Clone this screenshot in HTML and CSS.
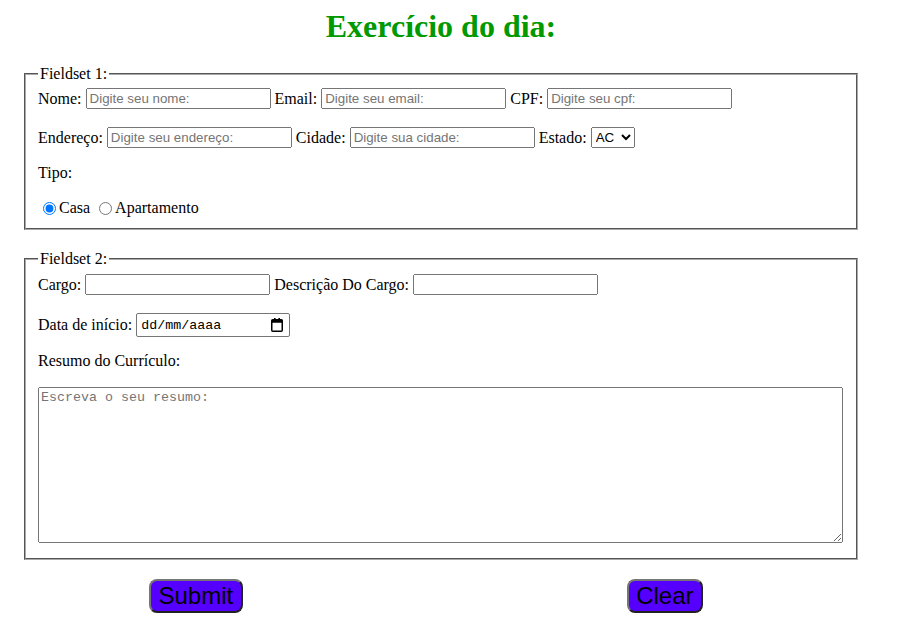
FILE: index.html
```html
<!DOCTYPE html>
<html lang="pt-BR">
<head>
<meta charset="utf-8">
<title>Exercício do dia</title>
<link rel="stylesheet" href="styles.css">
</head>
<body>
<div class="page">
  <h1 class="title">Exercício do dia:</h1>
  <form class="form">
    <fieldset class="box">
      <legend>Fieldset 1:</legend>
      <div class="row row-first">
        <label for="nome">Nome:</label><input class="field" id="nome" type="text" placeholder="Digite seu nome:">
        <label for="email">Email:</label><input class="field" id="email" type="email" placeholder="Digite seu email:">
        <label for="cpf">CPF:</label><input class="field" id="cpf" type="text" placeholder="Digite seu cpf:">
      </div>
      <div class="row row-next">
        <label for="end">Endereço:</label><input class="field" id="end" type="text" placeholder="Digite seu endereço:">
        <label for="cid">Cidade:</label><input class="field" id="cid" type="text" placeholder="Digite sua cidade:">
        <label for="est">Estado:</label><select id="est" class="sel"><option>AC</option><option>AL</option><option>AP</option></select>
      </div>
      <div class="row row-text">
        <span>Tipo:</span>
      </div>
      <div class="row row-text row-radio">
        <input type="radio" id="casa" name="tipo" checked><label for="casa">Casa</label>
        <input type="radio" id="apto" name="tipo" class="radio-second"><label for="apto">Apartamento</label>
      </div>
    </fieldset>
    <fieldset class="box box-second">
      <legend>Fieldset 2:</legend>
      <div class="row row-first">
        <label for="cargo">Cargo:</label><input class="field" id="cargo" type="text">
        <label for="desc">Descrição Do Cargo:</label><input class="field" id="desc" type="text">
      </div>
      <div class="row row-next row-date">
        <label for="data">Data de início:</label>
        <span class="date">
          <input id="data" class="date-input" type="text" placeholder="dd/mm/aaaa">
          <svg class="cal" width="12" height="14" viewBox="0 0 12 14" aria-hidden="true">
            <rect x="3" y="0" width="1.6" height="2" fill="#000"/>
            <rect x="7.4" y="0" width="1.6" height="2" fill="#000"/>
            <rect x="0.75" y="1.75" width="10.5" height="11.5" rx="1" fill="none" stroke="#000" stroke-width="1.5"/>
            <rect x="0.75" y="1.75" width="10.5" height="3" fill="#000"/>
          </svg>
        </span>
      </div>
      <div class="row row-resumo">
        <span>Resumo do Currículo:</span>
      </div>
      <textarea class="resumo" placeholder="Escreva o seu resumo:"></textarea>
    </fieldset>
    <div class="actions">
      <button type="submit" class="btn">Submit</button>
      <button type="reset" class="btn btn-clear">Clear</button>
    </div>
  </form>
</div>
</body>
</html>
```
FILE: styles.css
```css
body {
  margin: 8px;
  font-family: "Liberation Serif", "Times New Roman", serif;
  font-size: 16px;
  color: #000;
}
.page {
  width: 838px;
  margin-left: 14px;
}
.title {
  margin: 0 0 20px;
  text-align: center;
  color: #009900;
  font-size: 32px;
  line-height: 37px;
}
.box {
  margin: 0 2px;
  border: 2px groove #a9a9a9;
  padding: 5px 12px 11px;
}
.box legend {
  padding: 0 2px;
  line-height: 18px;
}
.box-second {
  margin-top: 20px;
  padding-top: 6px;
}
.row {
  display: flex;
  align-items: center;
  gap: 4px;
  height: 21px;
}
.row-first {
  margin-top: 0;
}
.row-next {
  margin-top: 18px;
}
.row-text {
  height: 18px;
  margin-top: 16px;
}
.row-radio {
  gap: 0;
  margin-top: 17px;
}
.row-radio input {
  margin: 0 3px 0 5px;
}
.row-radio .radio-second {
  margin-left: 9px;
}
.row-date {
  height: 24px;
}
.row-resumo {
  height: 18px;
  margin-top: 15px;
}
.field {
  box-sizing: border-box;
  width: 185px;
  height: 21px;
  margin: 0;
  font-family: "Liberation Sans", Arial, sans-serif;
  font-size: 13.33px;
}
.sel {
  width: 44px;
  height: 21px;
  font-family: "Liberation Sans", Arial, sans-serif;
  font-size: 13.33px;
  margin: 0;
}
.date {
  display: inline-flex;
  align-items: center;
  box-sizing: border-box;
  width: 154px;
  height: 24px;
  border: 1px solid #767676;
  border-radius: 2px;
  padding: 0 6px 0 3px;
}
.date-input {
  flex: 1;
  min-width: 0;
  border: 0;
  padding: 0 0 0 1px;
  outline: none;
  font-family: "Liberation Mono", "DejaVu Sans Mono", monospace;
  font-size: 13.33px;
  color: #000;
  background: transparent;
}
.date-input::placeholder {
  color: #000;
  opacity: 1;
}
.cal {
  display: block;
  flex: none;
}
.resumo {
  display: block;
  box-sizing: border-box;
  width: calc(100% - 1px);
  height: 156px;
  margin: 17px 0 4px;
  font-family: "Liberation Mono", monospace;
  font-size: 13.33px;
}
.actions {
  display: flex;
  margin-top: 19px;
  padding-left: 127px;
}
.btn {
  background: #5500ff;
  color: #000;
  font-family: "Liberation Sans", Arial, sans-serif;
  font-size: 24px;
  border: 2px outset #767676;
  border-radius: 8px;
  padding: 1px 7.5px;
}
.btn-clear {
  margin-left: 384px;
}
```
